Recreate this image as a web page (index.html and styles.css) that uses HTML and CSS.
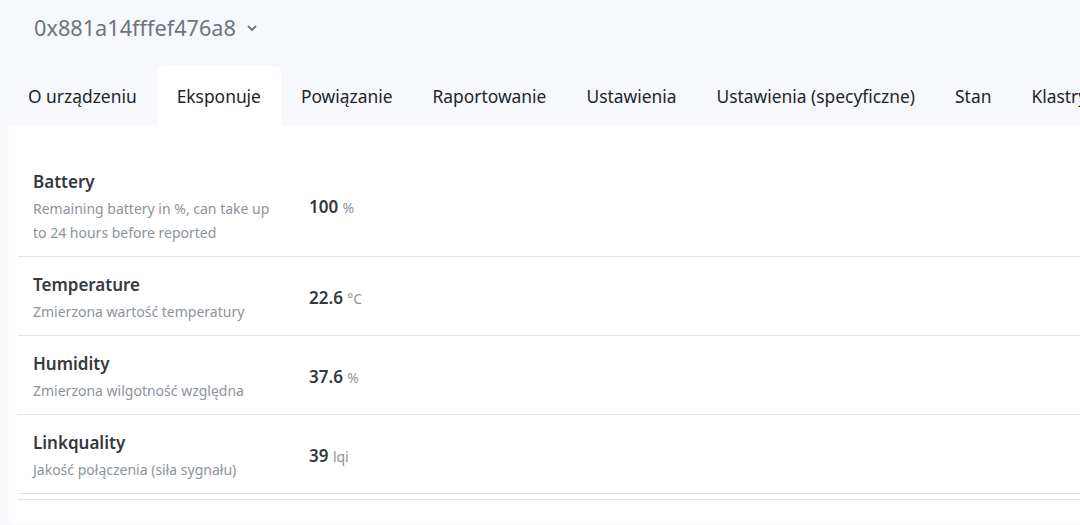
FILE: index.html
```html
<!DOCTYPE html>
<html lang="pl">
<head>
    <meta charset="UTF-8">
    <meta name="viewport" content="width=device-width, initial-scale=1.0">
    <title>0x881a14fffef476a8</title>
    <link rel="stylesheet" href="styles.css">
</head>
<body>
    <div class="page">
        <div class="device-header">
            <span class="device-name">0x881a14fffef476a8</span>
            <svg class="chevron" width="10" height="10" viewBox="0 0 10 10">
                <path d="M1.5 3.5 L5 7 L8.5 3.5" fill="none" stroke="#6c757d" stroke-width="1.8" stroke-linecap="round" stroke-linejoin="round"/>
            </svg>
        </div>

        <ul class="tabs">
            <li class="tab">O urządzeniu</li>
            <li class="tab active">Eksponuje</li>
            <li class="tab">Powiązanie</li>
            <li class="tab">Raportowanie</li>
            <li class="tab">Ustawienia</li>
            <li class="tab">Ustawienia (specyficzne)</li>
            <li class="tab">Stan</li>
            <li class="tab">Klastry</li>
        </ul>

        <div class="card">
            <table class="exposes">
                <tbody>
                    <tr>
                        <td class="feature">
                            <div class="feature-name">Battery</div>
                            <div class="feature-desc">Remaining battery in %, can take up to 24 hours before reported</div>
                        </td>
                        <td class="value"><strong>100</strong> <span class="unit">%</span></td>
                    </tr>
                    <tr>
                        <td class="feature">
                            <div class="feature-name">Temperature</div>
                            <div class="feature-desc">Zmierzona wartość temperatury</div>
                        </td>
                        <td class="value"><strong>22.6</strong> <span class="unit">°C</span></td>
                    </tr>
                    <tr>
                        <td class="feature">
                            <div class="feature-name">Humidity</div>
                            <div class="feature-desc">Zmierzona wilgotność względna</div>
                        </td>
                        <td class="value"><strong>37.6</strong> <span class="unit">%</span></td>
                    </tr>
                    <tr>
                        <td class="feature">
                            <div class="feature-name">Linkquality</div>
                            <div class="feature-desc">Jakość połączenia (siła sygnału)</div>
                        </td>
                        <td class="value"><strong>39</strong> <span class="unit">lqi</span></td>
                    </tr>
                </tbody>
            </table>
            <div class="table-end"></div>
        </div>
    </div>
</body>
</html>
```

FILE: styles.css
```css
body {
    margin: 0;
    font-family: "Noto Sans", "Open Sans", sans-serif;
    background-color: #f7f8fc;
    color: #212529;
    overflow: hidden;
}
.page {
    width: 1300px;
}
.device-header {
    display: flex;
    align-items: center;
    gap: 11px;
    height: 54px;
    padding-left: 34px;
}
.device-name {
    font-size: 21.7px;
    color: #6c757d;
}
.chevron {
    margin-top: 2px;
}
.tabs {
    display: flex;
    list-style: none;
    margin: 12px 0 0 8px;
    padding: 0;
}
.tab {
    padding: 0 20px;
    height: 59px;
    line-height: 61px;
    font-size: 17.4px;
    white-space: nowrap;
}
.tab.active {
    background: white;
    border-radius: 6px 6px 0 0;
}
.card {
    margin-left: 8px;
    background: white;
    border-radius: 0 0 0 6px;
    padding: 29px 0 24px 10px;
}
.exposes {
    width: 100%;
    border-collapse: collapse;
}
.exposes tr {
    border-bottom: 1px solid #dee4ec;
}
.feature {
    width: 246px;
    padding: 16px 15px 11px 15px;
    vertical-align: top;
}
.feature-name {
    font-size: 17px;
    font-weight: 600;
    line-height: 24px;
    color: #343a40;
    margin-bottom: 3px;
}
.feature-desc {
    font-size: 14px;
    line-height: 24px;
    color: #8c939b;
}
.value {
    padding: 3px 0 0 15px;
    vertical-align: middle;
    font-size: 17px;
    color: #343a40;
}
.value strong {
    font-weight: 600;
}
.unit {
    font-size: 14px;
    color: #8c939b;
}
.table-end {
    border-top: 1px solid #dee4ec;
    margin-top: 5px;
}
```
